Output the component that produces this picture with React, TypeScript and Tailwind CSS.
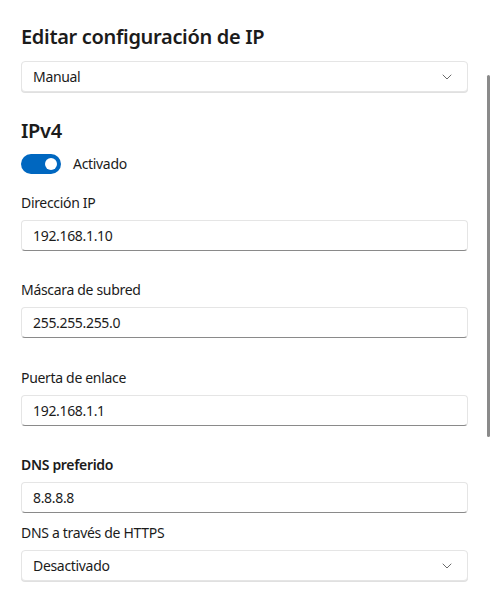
import React from 'react';

const fieldCls =
  'h-[31px] w-[447px] rounded-[4px] border border-[#e5e5e5] border-b-[#8a8a8a] bg-white px-[11px] flex items-center text-[14px] text-[#1b1b1b]';

function Chevron() {
  return (
    <svg width="10" height="6" viewBox="0 0 10 6" fill="none">
      <path d="M1 1L5 5L9 1" stroke="#6b6b6b" strokeWidth="1" strokeLinecap="round" strokeLinejoin="round" />
    </svg>
  );
}

function Select({ value }: { value: string }) {
  return (
    <div className="h-[31px] w-[447px] rounded-[4px] border border-[#e5e5e5] bg-white pl-[11px] pr-[15px] flex items-center justify-between text-[14px] text-[#1b1b1b] shadow-[0_1px_0_#e0e0e0]">
      <span>{value}</span>
      <Chevron />
    </div>
  );
}

function Field({ label, value, bold, gap }: { label: string; value: string; bold?: boolean; gap: string }) {
  return (
    <div className={gap}>
      <div className={`text-[14px] leading-[20px] text-[#1b1b1b] ${bold ? 'font-semibold' : ''}`}>{label}</div>
      <div className={`mt-[7px] ${fieldCls}`}>{value}</div>
    </div>
  );
}

export default function App() {
  return (
    <div
      className="relative w-[490px] h-[598px] bg-white overflow-hidden pl-[21px] tracking-[-0.02em]"
      style={{ fontFamily: '"Noto Sans", "Open Sans", sans-serif' }}
    >
      <h1 className="pt-[23px] text-[20px] leading-[28px] font-semibold text-[#1b1b1b]">Editar configuración de IP</h1>
      <div className="mt-[10px]">
        <Select value="Manual" />
      </div>

      <h2 className="mt-[25px] text-[20px] leading-[28px] font-semibold text-[#1b1b1b]">IPv4</h2>
      <div className="mt-[8px] flex items-center gap-[12px]">
        <div className="w-[40px] h-[20px] rounded-full bg-[#0067c0] flex items-center justify-end pr-[4px]">
          <div className="w-[12px] h-[12px] rounded-full bg-white" />
        </div>
        <span className="text-[14px] text-[#1b1b1b]">Activado</span>
      </div>

      <Field label="Dirección IP" value="192.168.1.10" gap="mt-[19px]" />
      <Field label="Máscara de subred" value="255.255.255.0" gap="mt-[29px]" />
      <Field label="Puerta de enlace" value="192.168.1.1" gap="mt-[30px]" />
      <Field label="DNS preferido" value="8.8.8.8" bold gap="mt-[29px]" />

      <div className="mt-[10px]">
        <div className="text-[14px] leading-[20px] text-[#1b1b1b]">DNS a través de HTTPS</div>
        <div className="mt-[7px]">
          <Select value="Desactivado" />
        </div>
      </div>

      <div className="absolute right-0 top-[75px] w-[3px] h-[362px] rounded-full bg-[#8a8a8a]" />
    </div>
  );
}
